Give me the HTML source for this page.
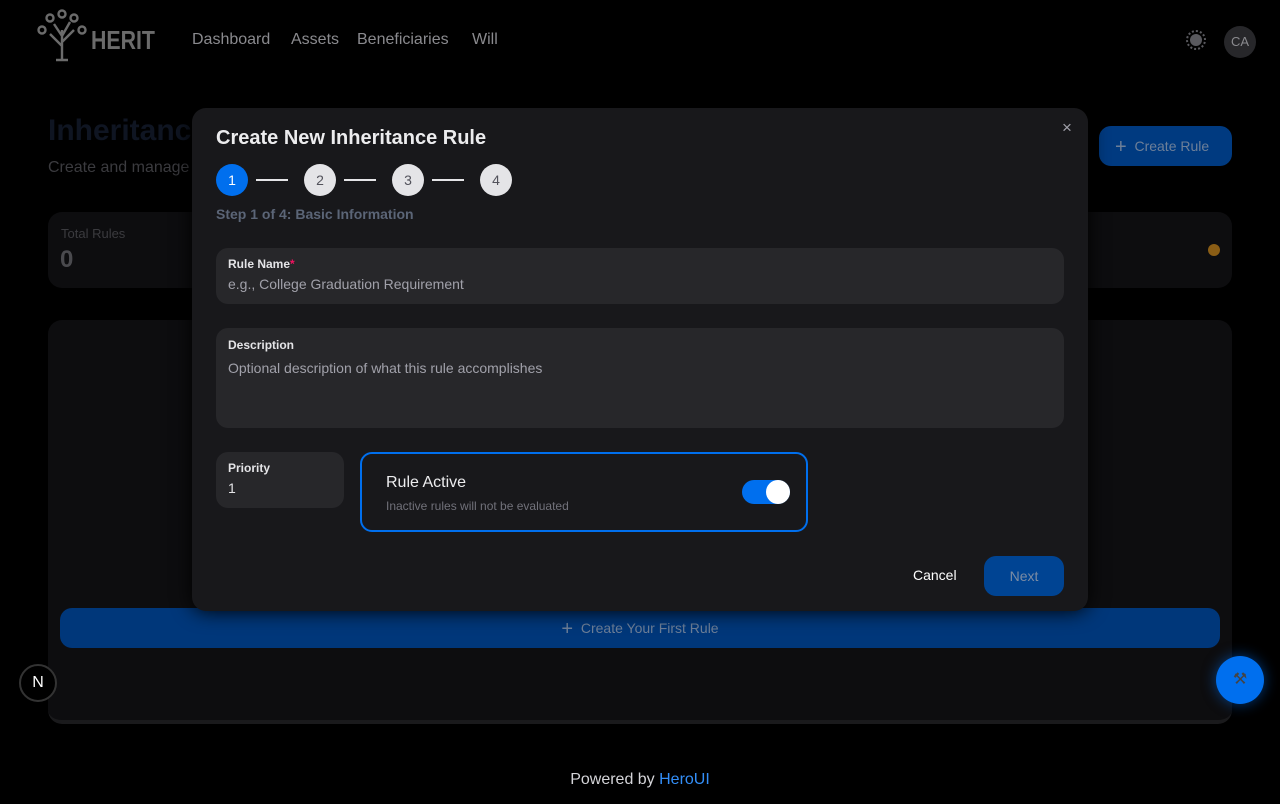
<!DOCTYPE html>
<html><head><style>
*{box-sizing:border-box;margin:0;padding:0}
body{width:1280px;height:804px;background:#000;font-family:"Liberation Sans",sans-serif;position:relative;overflow:hidden;color:#fff}
.abs{position:absolute}
.nav a{position:absolute;top:31px;font-size:16px;color:#8a8a8e}
</style></head><body>
<!-- header -->
<svg class="abs" style="left:34px;top:6px" width="56" height="56" viewBox="0 0 56 56" fill="none" stroke="#6b6b6b" stroke-width="2.4">
<path d="M28 54V24M28 40L16 28M28 36L40 24M28 30L20 18M28 30L36 16M22 54h12"/>
<circle cx="28" cy="8" r="3.5"/><circle cx="16" cy="12" r="3.5"/><circle cx="40" cy="12" r="3.5"/><circle cx="8" cy="24" r="3.5"/><circle cx="48" cy="24" r="3.5"/>
</svg>
<div class="abs" style="left:91px;top:25px;font-size:26px;font-weight:bold;color:#6b6b6b;transform:scaleX(0.82);transform-origin:left top">HERIT</div>
<div class="nav"><a style="left:192px">Dashboard</a><a style="left:291px">Assets</a><a style="left:357px">Beneficiaries</a><a style="left:472px">Will</a></div>
<div class="abs" style="left:1186px;top:30px;width:20px;height:20px;border-radius:50%;border:2px dotted #59595e"></div>
<div class="abs" style="left:1190px;top:34px;width:12px;height:12px;border-radius:50%;background:#59595e"></div>
<div class="abs" style="left:1224px;top:26px;width:32px;height:32px;border-radius:50%;background:#27272a;color:#8a8a8e;font-size:13px;text-align:center;line-height:32px">CA</div>
<!-- bg page -->
<div class="abs" style="left:48px;top:114px;font-size:30px;font-weight:bold;color:#0f1522">Inheritance</div>
<div class="abs" style="left:48px;top:159px;font-size:16px;color:#3b3b3f">Create and manage</div>
<div class="abs" style="left:1099px;top:126px;width:133px;height:40px;border-radius:12px;background:#003a80;color:#6d7f98;font-size:14px;line-height:40px;padding-left:16px"><span style="font-size:20px;vertical-align:-2px">+</span>&nbsp;&nbsp;Create Rule</div>
<div class="abs" style="left:48px;top:212px;width:1184px;height:76px;border-radius:14px;background:#0d0d0f"></div>
<div class="abs" style="left:61px;top:226px;font-size:13px;color:#3b3b3f">Total Rules</div>
<div class="abs" style="left:60px;top:246px;font-size:24px;font-weight:bold;color:#4a4a4e">0</div>
<div class="abs" style="left:1208px;top:244px;width:12px;height:12px;border-radius:50%;background:#8a5d15"></div>
<div class="abs" style="left:48px;top:320px;width:1184px;height:404px;border-radius:14px;background:#0d0d0f;border-bottom:4px solid #1a1a1c"></div>
<div class="abs" style="left:60px;top:608px;width:1160px;height:40px;border-radius:12px;background:#00377a;color:#6d7f98;font-size:14px;text-align:center;line-height:40px"><span style="font-size:20px;vertical-align:-2px">+</span>&nbsp; Create Your First Rule</div>
<div class="abs" style="left:19px;top:664px;width:38px;height:38px;border-radius:50%;background:#000;border:2px solid #333;color:#fff;font-size:16px;text-align:center;line-height:34px">N</div>
<div class="abs" style="left:1216px;top:656px;width:48px;height:48px;border-radius:50%;background:#006fee;box-shadow:0 0 14px #006fee88;text-align:center;line-height:48px;font-size:16px;color:#444">⚒</div>
<div class="abs" style="left:0;top:771px;width:1280px;text-align:center;font-size:16px;color:#d4d4d8">Powered by <span style="color:#338ef7">HeroUI</span></div>
<!-- modal -->
<div class="abs" style="left:192px;top:108px;width:896px;height:503px;border-radius:14px;background:#18181b;box-shadow:0 0 20px #000">
 <div class="abs" style="left:24px;top:19px;font-size:20px;font-weight:bold;color:#ececee">Create New Inheritance Rule</div>
 <div class="abs" style="left:870px;top:10px;font-size:17px;color:#a1a1aa">×</div>
 <div class="abs" style="left:24px;top:56px;width:32px;height:32px;border-radius:50%;background:#006fee;text-align:center;line-height:32px;font-size:14px">1</div>
 <div class="abs" style="left:64px;top:71px;width:32px;height:2px;background:#e4e4e7"></div>
 <div class="abs" style="left:112px;top:56px;width:32px;height:32px;border-radius:50%;background:#e4e4e7;color:#52525b;text-align:center;line-height:32px;font-size:14px">2</div>
 <div class="abs" style="left:152px;top:71px;width:32px;height:2px;background:#e4e4e7"></div>
 <div class="abs" style="left:200px;top:56px;width:32px;height:32px;border-radius:50%;background:#e4e4e7;color:#52525b;text-align:center;line-height:32px;font-size:14px">3</div>
 <div class="abs" style="left:240px;top:71px;width:32px;height:2px;background:#e4e4e7"></div>
 <div class="abs" style="left:288px;top:56px;width:32px;height:32px;border-radius:50%;background:#e4e4e7;color:#52525b;text-align:center;line-height:32px;font-size:14px">4</div>
 <div class="abs" style="left:24px;top:98px;font-size:14px;font-weight:bold;color:#5b6577">Step 1 of 4: Basic Information</div>
 <div class="abs" style="left:24px;top:140px;width:848px;height:56px;border-radius:12px;background:#27272a">
  <div class="abs" style="left:12px;top:9px;font-size:12px;font-weight:bold;color:#e4e4e7">Rule Name<span style="color:#f31260">*</span></div>
  <div class="abs" style="left:12px;top:28px;font-size:14px;color:#a1a1aa">e.g., College Graduation Requirement</div>
 </div>
 <div class="abs" style="left:24px;top:220px;width:848px;height:100px;border-radius:12px;background:#27272a">
  <div class="abs" style="left:12px;top:10px;font-size:12px;font-weight:bold;color:#e4e4e7">Description</div>
  <div class="abs" style="left:12px;top:32px;font-size:14px;color:#a1a1aa">Optional description of what this rule accomplishes</div>
 </div>
 <div class="abs" style="left:24px;top:344px;width:128px;height:56px;border-radius:12px;background:#27272a">
  <div class="abs" style="left:12px;top:9px;font-size:12px;font-weight:bold;color:#e4e4e7">Priority</div>
  <div class="abs" style="left:12px;top:28px;font-size:14px;color:#e4e4e7">1</div>
 </div>
 <div class="abs" style="left:168px;top:344px;width:448px;height:80px;border-radius:12px;border:2px solid #006fee">
  <div class="abs" style="left:24px;top:20px;font-size:16px;color:#ececee">Rule Active</div>
  <div class="abs" style="left:24px;top:45px;font-size:12px;color:#71717a">Inactive rules will not be evaluated</div>
  <div class="abs" style="left:380px;top:26px;width:48px;height:24px;border-radius:12px;background:#006fee"><div class="abs" style="right:0;top:0;width:24px;height:24px;border-radius:50%;background:#fff"></div></div>
 </div>
 <div class="abs" style="left:721px;top:459px;font-size:14px;color:#fff">Cancel</div>
 <div class="abs" style="left:792px;top:448px;width:80px;height:40px;border-radius:12px;background:#004493;color:#7b8ca4;font-size:14px;text-align:center;line-height:40px">Next</div>
</div>
</body></html>
